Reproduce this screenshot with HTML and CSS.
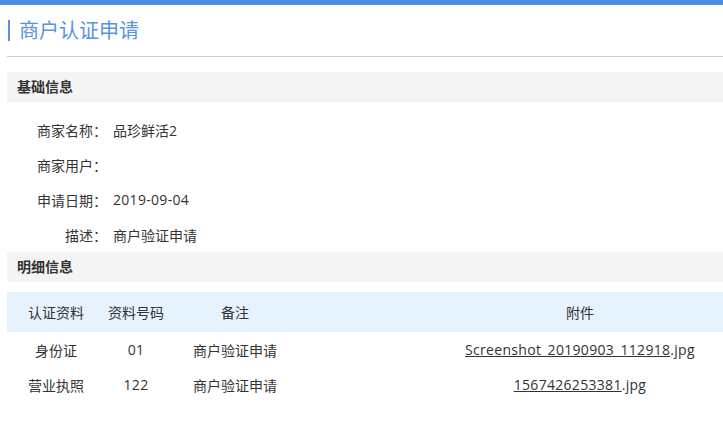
FILE: index.html
```html
<!DOCTYPE html>
<html lang="zh-CN">
<head>
<meta charset="utf-8">
<title>商户认证申请</title>
<link rel="stylesheet" href="styles.css">
</head>
<body>
<div class="topbar"></div>
<div class="page">
  <div class="title-wrap">
    <h2 class="title">商户认证申请</h2>
  </div>

  <div class="section-head">基础信息</div>
  <div class="info">
    <div class="info-row"><span class="label">商家名称<span class="colon">：</span></span><span class="value">品珍鲜活<span class="latin">2</span></span></div>
    <div class="info-row"><span class="label">商家用户<span class="colon">：</span></span><span class="value"></span></div>
    <div class="info-row"><span class="label">申请日期<span class="colon">：</span></span><span class="value latin">2019-09-04</span></div>
    <div class="info-row"><span class="label">描述<span class="colon">：</span></span><span class="value">商户验证申请</span></div>
  </div>

  <div class="section-head">明细信息</div>
  <table class="detail">
    <thead>
      <tr>
        <th class="c1">认证资料</th>
        <th class="c2">资料号码</th>
        <th class="c3">备注</th>
        <th class="c4">附件</th>
      </tr>
    </thead>
    <tbody>
      <tr>
        <td>身份证</td>
        <td class="latin">01</td>
        <td>商户验证申请</td>
        <td class="latin"><a href="#" class="file">Screenshot_20190903_112918</a>.jpg</td>
      </tr>
      <tr>
        <td>营业执照</td>
        <td class="latin">122</td>
        <td>商户验证申请</td>
        <td class="latin"><a href="#" class="file">1567426253381</a>.jpg</td>
      </tr>
    </tbody>
  </table>
</div>
</body>
</html>
```

FILE: styles.css
```css
html, body {
  margin: 0;
  padding: 0;
  overflow: hidden;
  background: #fff;
}
body {
  font-family: "Open Sans", "Noto Sans CJK SC", sans-serif;
  font-size: 14px;
  color: #333;
}
.topbar {
  height: 5px;
  background: #4e8fe3;
  min-width: 860px;
}
.page {
  margin-left: 7px;
  width: 850px;
}
.title-wrap {
  padding: 15px 0 15px 1px;
  border-bottom: 1px solid #cfcfcf;
}
.title {
  margin: 0;
  font-size: 20px;
  font-weight: normal;
  line-height: 21px;
  color: #5a92e2;
  border-left: 2px solid #5a92e2;
  padding-left: 9px;
}
.section-head {
  margin-top: 15px;
  height: 30px;
  line-height: 30px;
  background: #f4f4f4;
  padding-left: 10px;
  font-weight: bold;
  color: #333;
}
.info {
  padding-top: 10px;
}
.info + .section-head {
  margin-top: 0;
}
.info-row {
  display: flex;
  height: 35px;
  align-items: center;
}
.label {
  width: 100px;
  text-align: right;
}
.colon {
  font-family: "Noto Sans CJK JP", sans-serif;
}
.value {
  margin-left: 6px;
}
.latin {
  letter-spacing: 0.3px;
}
.detail {
  margin-top: 10px;
  width: 100%;
  border-collapse: collapse;
  table-layout: fixed;
}
.detail th {
  background: #e6f2fd;
  height: 40px;
  font-weight: normal;
  padding: 0;
  text-align: center;
}
.detail td {
  height: 35px;
  padding: 0;
  text-align: center;
}
.c1 { width: 98px; }
.c2 { width: 62px; }
.c3 { width: 136px; }
.file {
  color: #333;
  text-decoration: underline;
}
```
